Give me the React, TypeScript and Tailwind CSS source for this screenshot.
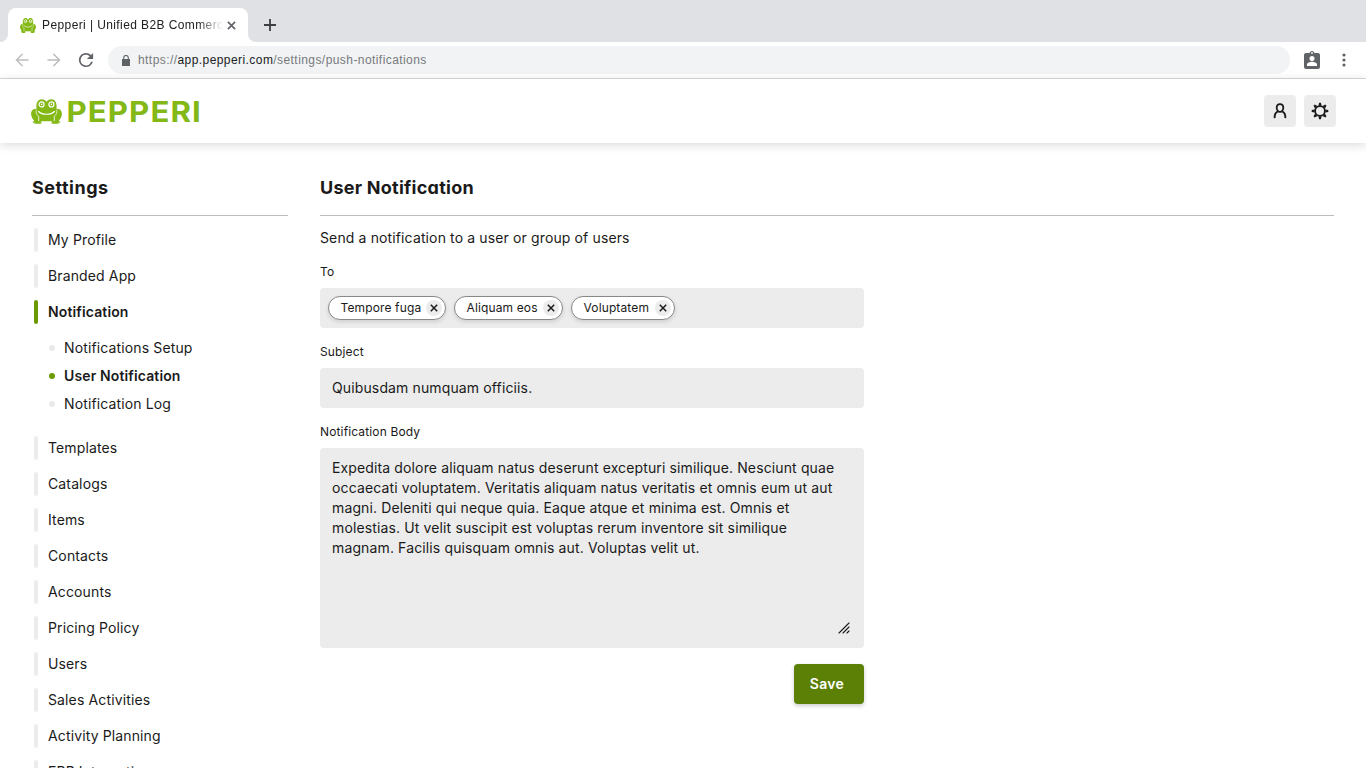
import React from "react";

const Frog = ({ className }: { className: string }) => (
  <svg viewBox="0 0 31 25" preserveAspectRatio="none" className={className}>
    <g fill="#83b817">
      <path d="M4.500 9.800C1.500 10 0 12.500.1 15.200c.1 2.600 1.500 4.600 3 6.300L1.500 23.800h9L8 12ZM26.500 9.800c3 .2 4.500 2.700 4.400 5.400-.1 2.600-1.500 4.600-3 6.300l1.600 2.300h-9L23 12Z" />
      <path d="M5.500 9C4.800 4.500 6.800.2 10.500.2c2.400 0 3.900.9 5 2.600C16.600 1.100 18.100.2 20.500.2c3.700 0 5.700 4.300 5 8.800 1.100 2.800.3 5.800-2 7.500l-.7 6H8.200l-.7-6C5.200 14.800 4.400 11.800 5.500 9Z" />
      <path d="M3 24.800 6.500 21.500l4.500 3.300ZM28 24.800 24.500 21.500 20 24.800Z" />
    </g>
    <g fill="none" stroke="#fff" strokeLinecap="round">
      <path d="M5.200 11c-.7 2.500.3 4.700 2.300 6.200M25.800 11c.7 2.500-.3 4.700-2.300 6.200" strokeWidth=".7" />
      <path d="M7.500 12.500c3.600 3.600 12.400 3.600 16 0" strokeWidth="1.100" />
      <path d="M7.700 17.500v4.300M23.300 17.500v4.300M11 22.800h9" strokeWidth=".8" />
      <circle cx="10.600" cy="5.400" r="2.500" strokeWidth="1.200" />
      <circle cx="20.400" cy="5.400" r="2.500" strokeWidth="1.200" />
    </g>
    <circle cx="10.600" cy="5.400" r=".8" fill="#fff" />
    <circle cx="20.400" cy="5.400" r=".8" fill="#fff" />
  </svg>
);

const Bar = ({ label, active = false }: { label: string; active?: boolean }) => (
  <li className="flex h-6 items-center">
    <span className={active ? "ml-0.5 h-6 w-1 rounded-xs bg-[#6c9a05]" : "ml-0.5 h-6 w-1 rounded-xs bg-[#ececec]"} />
    <span className={active ? "ml-2.5 font-semibold" : "ml-2.5"}>{label}</span>
  </li>
);

const Sub = ({ label, active = false }: { label: string; active?: boolean }) => (
  <li className="flex h-5 items-center">
    <span className={active ? "h-1.5 w-1.5 rounded-full bg-[#6c9a05]" : "h-1.5 w-1.5 rounded-full bg-[#e9e9e9]"} />
    <span className={active ? "ml-[9px] font-semibold" : "ml-[9px]"}>{label}</span>
  </li>
);

const Chip = ({ label, width }: { label: string; width: string }) => (
  <span className={`${width} flex h-6 items-center justify-between rounded-full border border-[#888] bg-white pr-[3px] pl-[11.5px] text-xs tracking-[0.13px] shadow-[0_2px_4px_rgba(0,0,0,0.12)]`}>
    {label}
    <span className="flex h-4 w-4 items-center justify-center rounded-full bg-[#ececec]">
      <svg viewBox="0 0 8 8" className="h-2 w-2" stroke="#1a1a1a" strokeWidth="1.500">
        <path d="M.8.8 7.200 7.200M7.200.8.8 7.200" />
      </svg>
    </span>
  </span>
);

const Label = ({ text }: { text: string }) => <div className="h-4 text-xs leading-4 tracking-[0.14px]">{text}</div>;

const gearTeeth = [0, 45, 90, 135, 180, 225, 270, 315];

export default function App() {
  return (
    <div className="flex h-screen flex-col overflow-hidden bg-white font-[Inter,sans-serif] font-[370] text-[#1a1a1a]">
      <header className="shrink-0 font-['Liberation_Sans',Arial,sans-serif] font-normal">
        <div className="flex h-[42px] items-end bg-[#dfe1e5]">
          <svg viewBox="0 0 8 8" className="h-2 w-2" fill="#fff"><path d="M8 0v8H0a8 8 0 0 0 8-8Z" /></svg>
          <div className="flex h-[34px] w-60 items-center rounded-t-lg bg-white pl-3">
            <Frog className="h-[15px] w-4" />
            <div className="ml-1.5 w-[181px] overflow-hidden text-xs tracking-[0.4px] whitespace-nowrap text-[#202124] [mask-image:linear-gradient(to_right,black_156px,transparent_181px)]">Pepperi | Unified B2B Commerce</div>
            <svg viewBox="0 0 10 10" className="ml-1 h-[9px] w-[9px]" stroke="#5f6368" strokeWidth="1.800"><path d="m1 1 8 8M9 1 1 9" /></svg>
          </div>
          <svg viewBox="0 0 8 8" className="h-2 w-2" fill="#fff"><path d="M0 0v8h8a8 8 0 0 1-8-8Z" /></svg>
          <svg viewBox="0 0 12 12" className="mb-[11px] ml-2 h-3 w-3" stroke="#3c4043" strokeWidth="1.800"><path d="M6 0v12M0 6h12" /></svg>
        </div>
        <div className="flex h-[37px] items-center border-b border-[#d9dadc] pl-3.5">
          <svg viewBox="0 0 16 16" className="h-4 w-4" fill="none" stroke="#babcbe" strokeWidth="1.500"><path d="M14.500 8h-12M8.500 2 2.500 8l6 6" /></svg>
          <svg viewBox="0 0 16 16" className="ml-4 h-4 w-4" fill="none" stroke="#babcbe" strokeWidth="1.500"><path d="M1.500 8h12M7.500 2l6 6-6 6" /></svg>
          <svg viewBox="3 3 18 18" className="ml-4 h-4 w-4" fill="#5f6368"><path d="M17.650 6.350A7.960 7.960 0 0 0 12 4a8 8 0 1 0 7.730 10h-2.080A6 6 0 1 1 12 6c1.660 0 3.140.69 4.220 1.780L13 11h7V4l-2.350 2.350Z" /></svg>
          <div className="ml-3.5 flex h-7 w-[1182px] items-center rounded-full bg-[#f1f3f4] pl-3.5 text-xs tracking-[0.43px] text-[#777a7d]">
            <svg viewBox="0 0 8 11" className="h-[11px] w-2" fill="#5f6368"><path d="M0 4h8v7H0Z" /><path d="M1.700 5V2.800a2.300 2.300 0 0 1 4.600 0V5" fill="none" stroke="#5f6368" strokeWidth="1.100" /></svg>
            <span className="ml-2">https://<span className="text-[#202124]">app.pepperi.com</span>/settings/push-notifications</span>
          </div>
          <svg viewBox="0 0 16 19" className="mb-0.5 ml-3.5 h-[19px] w-4"><path d="M2 3h3.500a2.600 2.600 0 0 1 5 0H14a2 2 0 0 1 2 2v12a2 2 0 0 1-2 2H2a2 2 0 0 1-2-2V5a2 2 0 0 1 2-2Z" fill="#5f6368" /><circle cx="8" cy="3" r=".9" fill="#fff" /><circle cx="8" cy="8.500" r="2.500" fill="#fff" /><path d="M3 16v-1.500c0-1.800 3.300-2.700 5-2.700s5 .9 5 2.700V16Z" fill="#fff" /></svg>
          <svg viewBox="0 0 4 14" className="ml-[22px] h-3.5 w-1" fill="#5f6368"><circle cx="2" cy="2" r="1.600" /><circle cx="2" cy="7" r="1.600" /><circle cx="2" cy="12" r="1.600" /></svg>
        </div>
      </header>

      <div className="z-10 flex h-16 shrink-0 items-center justify-between bg-white pr-[30.5px] pl-[31px] shadow-[0_2px_10px_rgba(0,0,0,0.15)]">
        <div className="flex items-center">
          <Frog className="h-[25px] w-[31px]" />
          <svg viewBox="0 0 140 26" className="ml-1 h-[26px] w-[140px] overflow-visible" fill="#83b817">
            <text x=".4" y="23.500" fontFamily="Inter" fontWeight="650" fontSize="28.500" letterSpacing="1" textLength="135.500" lengthAdjust="spacingAndGlyphs">PEPPERI</text>
          </svg>
        </div>
        <div className="flex gap-2">
          <button className="flex h-8 w-8 items-center justify-center rounded bg-[#ececec]">
            <svg viewBox="0 0 14 16" className="h-4 w-3.5" fill="none" stroke="#1a1a1a" strokeWidth="1.800"><path d="M7 1.200c2.100 0 3.300 1.400 3.300 3.600S8.800 8.800 7 8.800 3.700 7 3.700 4.800 4.900 1.200 7 1.200Z" /><path d="M1.700 15.200c-.3-3.400.3-5.700 3.300-6.900M12.300 15.200c.3-3.400-.3-5.700-3.300-6.900" /></svg>
          </button>
          <button className="flex h-8 w-8 items-center justify-center rounded bg-[#ececec]">
            <svg viewBox="-9 -9 18 18" className="h-[18px] w-[18px]" fill="none" stroke="#1a1a1a" strokeWidth="1.800"><circle r="4.900" />{gearTeeth.map((a) => <path key={a} d="M-1.600-5.300-.9-8.300h1.800L1.600-5.300Z" fill="#1a1a1a" stroke="none" transform={`rotate(${a})`} />)}</svg>
          </button>
        </div>
      </div>

      <div className="flex min-h-0 flex-1 gap-8 pt-[33px] pr-8 pl-8 text-sm leading-5 tracking-[0.13px]">
        <nav className="w-64 shrink-0">
          <h1 className="h-10 border-b border-[#bcbcbc] text-lg leading-6 font-bold tracking-[0.5px] [font-feature-settings:'cv11']">Settings</h1>
          <ul className="mt-3 flex flex-col gap-3">
            <Bar label="My Profile" />
            <Bar label="Branded App" />
            <Bar label="Notification" active />
            <li className="mb-2.5 pl-[17px]">
              <ul className="mt-0.5 flex flex-col gap-2">
                <Sub label="Notifications Setup" />
                <Sub label="User Notification" active />
                <Sub label="Notification Log" />
              </ul>
            </li>
            <Bar label="Templates" />
            <Bar label="Catalogs" />
            <Bar label="Items" />
            <Bar label="Contacts" />
            <Bar label="Accounts" />
            <Bar label="Pricing Policy" />
            <Bar label="Users" />
            <Bar label="Sales Activities" />
            <Bar label="Activity Planning" />
            <Bar label="ERP Integration" />
          </ul>
        </nav>
        <main className="w-[1014px] shrink-0">
          <h2 className="h-10 border-b border-[#bcbcbc] text-lg leading-6 font-bold tracking-[0.25px] [font-feature-settings:'cv11']">User Notification</h2>
          <p className="mt-3 h-5">Send a notification to a user or group of users</p>
          <div className="mt-4 flex w-[544px] flex-col">
            <Label text="To" />
            <div className="mt-2 flex h-10 items-center gap-2 rounded bg-[#ececec] px-2">
              <Chip label="Tempore fuga" width="w-[118px]" />
              <Chip label="Aliquam eos" width="w-[109px]" />
              <Chip label="Voluptatem" width="w-[104px]" />
            </div>
            <div className="mt-4"><Label text="Subject" /></div>
            <div className="mt-2 flex h-10 items-center rounded bg-[#ececec] px-3">Quibusdam numquam officiis.</div>
            <div className="mt-4"><Label text="Notification Body" /></div>
            <div className="mt-2 flex h-[200px] flex-col justify-between rounded bg-[#ececec] px-3 pt-2.5 pb-3.5">
              <p>
                Expedita dolore aliquam natus deserunt excepturi similique. Nesciunt quae<br />
                occaecati voluptatem. Veritatis aliquam natus veritatis et omnis eum ut aut<br />
                magni. Deleniti qui neque quia. Eaque atque et minima est. Omnis et<br />
                molestias. Ut velit suscipit est voluptas rerum inventore sit similique<br />
                magnam. Facilis quisquam omnis aut. Voluptas velit ut.
              </p>
              <svg viewBox="0 0 12 12" className="mr-0.5 h-3 w-3 self-end" stroke="#1a1a1a" strokeWidth="1.100" strokeLinecap="round"><path d="M1 11 11 1M5 11l6-6M9 11l2-2" /></svg>
            </div>
            <button className="mt-4 h-10 w-[70px] self-end rounded bg-[#5c8006] pr-1 font-semibold tracking-[0.3px] text-white shadow-[0_2px_4px_rgba(0,0,0,0.2)]">Save</button>
          </div>
        </main>
      </div>
    </div>
  );
}
